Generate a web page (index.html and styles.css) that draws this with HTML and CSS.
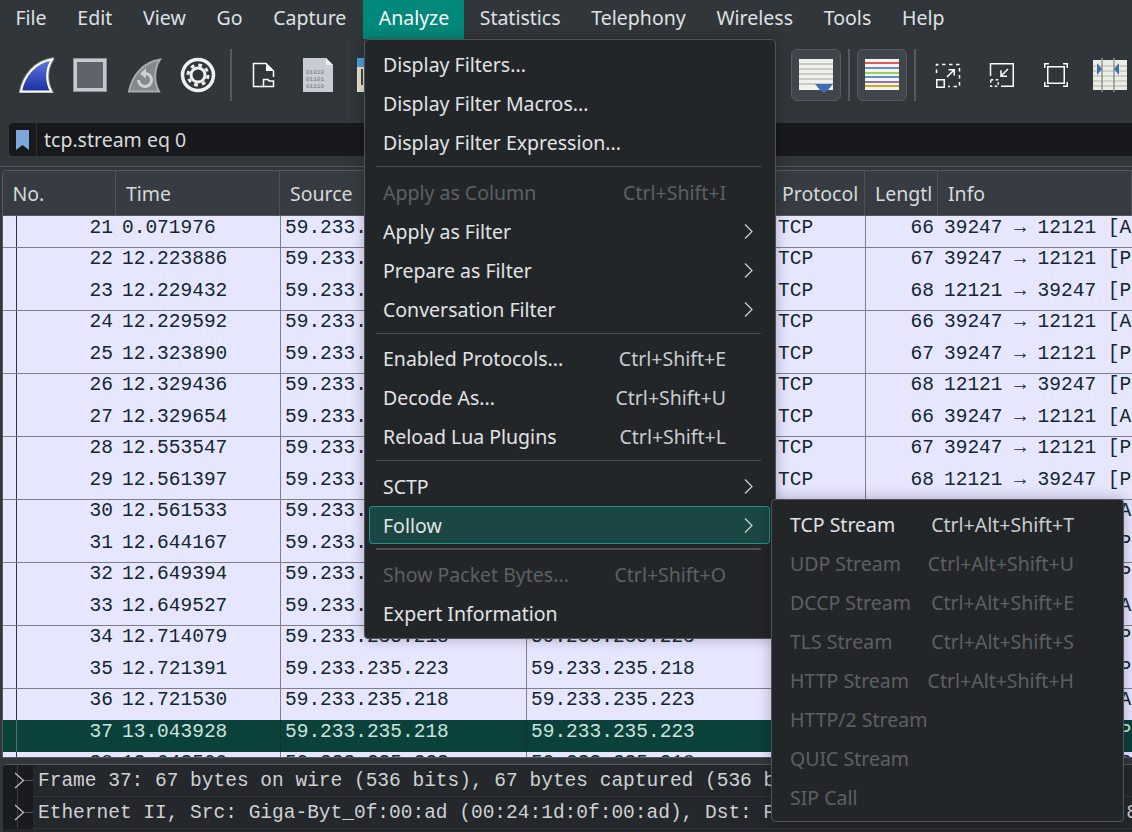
FILE: index.html
```html
<!DOCTYPE html>
<html>
  <head>
    <title>Wireshark</title>
    <link rel="stylesheet" href="styles.css">
  </head>
  <body>
    <div class="menubar">
      <div class="mb-item">File</div>
      <div class="mb-item">Edit</div>
      <div class="mb-item">View</div>
      <div class="mb-item">Go</div>
      <div class="mb-item">Capture</div>
      <div class="mb-item mb-open">Analyze</div>
      <div class="mb-item">Statistics</div>
      <div class="mb-item">Telephony</div>
      <div class="mb-item">Wireless</div>
      <div class="mb-item">Tools</div>
      <div class="mb-item">Help</div>
    </div>

    <div class="toolbar">
      <div class="tool">
        <svg width="36" height="36" viewBox="0 0 36 36">
          <defs>
            <linearGradient id="fin" x1="0" y1="0" x2="0" y2="1">
              <stop offset="0" stop-color="#5f7ae0"/>
              <stop offset="1" stop-color="#1c2fa6"/>
            </linearGradient>
          </defs>
          <path class="fin-edge" d="M3 34.500C6 19 17 5 34 2.500C28 12 27.500 24 33 34.500Z"/>
          <path d="M3 34.500C6 19 17 5 34 2.500C28 12 27.500 24 33 34.500Z" fill="url(#fin)" stroke="#fff" stroke-width="2"/>
        </svg>
      </div>
      <div class="tool">
        <svg width="36" height="36" viewBox="0 0 36 36">
          <rect x="2.500" y="2.500" width="31" height="31" fill="#5f636b" stroke="#8d9196" stroke-width="3"/>
          <rect x="3.500" y="3.500" width="29" height="29" fill="none" stroke="#c6cad0" stroke-width="3"/>
        </svg>
      </div>
      <div class="tool">
        <svg width="36" height="36" viewBox="0 0 36 36">
          <path d="M3 34.500C6 19 17 5 34 2.500C28 12 27.500 24 33 34.500Z" fill="#85898d" stroke="#a9adb1" stroke-width="2"/>
          <path d="M12.500 23A6.500 6.500 0 1 0 19 16.500" fill="none" stroke="#cdd1d5" stroke-width="3"/>
          <path d="M20 11.500V21.500L14 16.500Z" fill="#cdd1d5"/>
        </svg>
      </div>
      <div class="tool">
        <svg width="36" height="36" viewBox="0 0 36 36">
          <circle cx="18" cy="18" r="15.500" fill="none" stroke="#f0f0f0" stroke-width="3.500"/>
          <circle cx="18" cy="18" r="7" fill="none" stroke="#f0f0f0" stroke-width="3"/>
          <circle cx="18" cy="18" r="10" fill="none" stroke="#f0f0f0" stroke-width="3" stroke-dasharray="3.800 4.050"/>
        </svg>
      </div>
      <div class="tb-sep"></div>
      <div class="tool">
        <svg width="36" height="36" viewBox="0 0 36 36">
          <path d="M18 29.500H7.500V6.500H20L27.500 14V20" fill="none" stroke="#fff" stroke-width="1.500"/>
          <path d="M20 6.500V14H27.500Z" fill="#fff"/>
          <path d="M17.500 29.500V22.500H22L23 24H27.500V29.500Z" fill="none" stroke="#fff" stroke-width="1.500"/>
        </svg>
      </div>
      <div class="tool">
        <svg width="36" height="36" viewBox="0 0 36 36">
          <path d="M3 1H26L33 8V35H3Z" fill="#c9ccd4"/>
          <path d="M26 1L33 8H26Z" fill="#eef0f3"/>
          <text class="bin" x="6" y="17">01010</text>
          <text class="bin" x="6" y="24">01101</text>
          <text class="bin" x="6" y="31">01110</text>
        </svg>
      </div>
      <div class="tool">
        <svg width="36" height="36" viewBox="0 0 36 36">
          <rect x="3" y="1" width="30" height="34" fill="#e8e4cc"/>
          <rect x="3" y="1" width="30" height="9" fill="#4d9fd8"/>
          <rect x="7" y="12" width="2" height="16" fill="#444"/>
        </svg>
      </div>
      <div class="tb-hidden"></div>
      <div class="tool tool-on">
        <svg width="36" height="36" viewBox="0 0 36 36">
          <rect x="1" y="2" width="34" height="31" fill="#f0f0ec"/>
          <path d="M1 7H35M1 12H35M1 17H35M1 22H35M1 27H35" stroke="#bfc0b8" stroke-width="1.500"/>
          <path d="M17 27H35L30 33L26 36L22 33Z" fill="#3d6db0"/>
        </svg>
      </div>
      <div class="tb-sep"></div>
      <div class="tool tool-on">
        <svg width="36" height="36" viewBox="0 0 36 36">
          <rect x="1" y="2" width="34" height="31" fill="#f4f4f4"/>
          <path d="M1 6H35" stroke="#e02424" stroke-width="1.500"/>
          <path d="M1 11H35" stroke="#2f6fb5" stroke-width="1.500"/>
          <path d="M1 16H35" stroke="#7cc423" stroke-width="1.500"/>
          <path d="M1 20H35" stroke="#2f6fb5" stroke-width="1.500"/>
          <path d="M1 25H35" stroke="#6a4a8c" stroke-width="1.500"/>
          <path d="M1 29H35" stroke="#d0a814" stroke-width="2"/>
        </svg>
      </div>
      <div class="tb-sep"></div>
      <div class="tool">
        <svg width="36" height="36" viewBox="0 0 36 36">
          <path d="M6.500 16V7.500H29.500V29.500H18" fill="none" stroke="#fff" stroke-width="1.500" stroke-dasharray="3.500 3.500"/>
          <rect x="6.750" y="22.750" width="7.500" height="7.500" fill="none" stroke="#fff" stroke-width="1.500"/>
          <path d="M17 20L24 13M18.500 12.750H24.250V18.500" fill="none" stroke="#fff" stroke-width="1.500"/>
        </svg>
      </div>
      <div class="tool">
        <svg width="36" height="36" viewBox="0 0 36 36">
          <path d="M6.500 19V6.750H29.250V29.250H17" fill="none" stroke="#fff" stroke-width="1.500"/>
          <rect x="6.750" y="22.750" width="7.500" height="6.500" fill="none" stroke="#fff" stroke-width="1.500" stroke-dasharray="2.500 2.500"/>
          <path d="M24 12L17 19M17 13.250V19.250H23" fill="none" stroke="#fff" stroke-width="1.500"/>
        </svg>
      </div>
      <div class="tool">
        <svg width="36" height="36" viewBox="0 0 36 36">
          <rect x="9.750" y="9.750" width="16.500" height="16.500" fill="none" stroke="#fff" stroke-width="1.500"/>
          <path d="M6.750 11V6.750H11M25 6.750H29.250V11M29.250 25V29.250H25M11 29.250H6.750V25" fill="none" stroke="#fff" stroke-width="1.500"/>
        </svg>
      </div>
      <div class="tool">
        <svg width="36" height="36" viewBox="0 0 36 36">
          <rect x="1" y="3" width="34" height="30" fill="#eceee6"/>
          <path d="M1 9H35M1 14H35M1 19H35M1 24H35M1 29H35" stroke="#c5c7bf" stroke-width="1.500"/>
          <path d="M10 1V35M22 1V35" stroke="#8f9290" stroke-width="1.500"/>
          <path d="M5 6L10 12L5 18Z" fill="#3d6db0"/>
          <path d="M27 6L22 12L27 18Z" fill="#3d6db0"/>
        </svg>
      </div>
    </div>

    <div class="filterbar">
      <div class="filter-mark">
        <svg width="13" height="20" viewBox="0 0 13 20"><path d="M0 0H13V20L6.500 15L0 20Z" fill="#7ba7dc"/></svg>
      </div>
      <div class="filter-text">tcp.stream eq 0</div>
    </div>
    <div class="hsplit"></div>

    <div class="packets">
      <div class="head">
        <div class="hcell">No.</div>
        <div class="hcell">Time</div>
        <div class="hcell">Source</div>
        <div class="hcell">Destination</div>
        <div class="hcell">Protocol</div>
        <div class="hcell">Lengtl</div>
        <div class="hcell">Info</div>
      </div>

      <div class="row line"><i></i><b>21</b><span>0.071976</span><u>59.233.235.218</u><u>59.233.235.223</u><span>TCP</span><u class="len">66</u><span>39247 → 12121 [ACK] Seq=1 Ack=1 Win=64256</span></div>
      <div class="row"><i></i><b>22</b><span>12.223886</span><u>59.233.235.218</u><u>59.233.235.223</u><span>TCP</span><u class="len">67</u><span>39247 → 12121 [PSH, ACK] Seq=1 Ack=1</span></div>
      <div class="row line"><i></i><b>23</b><span>12.229432</span><u>59.233.235.223</u><u>59.233.235.218</u><span>TCP</span><u class="len">68</u><span>12121 → 39247 [PSH, ACK] Seq=1 Ack=2</span></div>
      <div class="row"><i></i><b>24</b><span>12.229592</span><u>59.233.235.218</u><u>59.233.235.223</u><span>TCP</span><u class="len">66</u><span>39247 → 12121 [ACK] Seq=2 Ack=3</span></div>
      <div class="row line"><i></i><b>25</b><span>12.323890</span><u>59.233.235.218</u><u>59.233.235.223</u><span>TCP</span><u class="len">67</u><span>39247 → 12121 [PSH, ACK] Seq=2 Ack=3</span></div>
      <div class="row"><i></i><b>26</b><span>12.329436</span><u>59.233.235.223</u><u>59.233.235.218</u><span>TCP</span><u class="len">68</u><span>12121 → 39247 [PSH, ACK] Seq=3 Ack=3</span></div>
      <div class="row line"><i></i><b>27</b><span>12.329654</span><u>59.233.235.218</u><u>59.233.235.223</u><span>TCP</span><u class="len">66</u><span>39247 → 12121 [ACK] Seq=3 Ack=5</span></div>
      <div class="row"><i></i><b>28</b><span>12.553547</span><u>59.233.235.218</u><u>59.233.235.223</u><span>TCP</span><u class="len">67</u><span>39247 → 12121 [PSH, ACK] Seq=3 Ack=5</span></div>
      <div class="row line"><i></i><b>29</b><span>12.561397</span><u>59.233.235.223</u><u>59.233.235.218</u><span>TCP</span><u class="len">68</u><span>12121 → 39247 [PSH, ACK] Seq=5 Ack=4</span></div>
      <div class="row"><i></i><b>30</b><span>12.561533</span><u>59.233.235.218</u><u>59.233.235.223</u><span>TCP</span><u class="len">66</u><span>39247 → 12121 [ACK] Seq=4 Ack=7</span></div>
      <div class="row line"><i></i><b>31</b><span>12.644167</span><u>59.233.235.218</u><u>59.233.235.223</u><span>TCP</span><u class="len">67</u><span>39247 → 12121 [PSH, ACK] Seq=4 Ack=7</span></div>
      <div class="row"><i></i><b>32</b><span>12.649394</span><u>59.233.235.223</u><u>59.233.235.218</u><span>TCP</span><u class="len">68</u><span>12121 → 39247 [PSH, ACK] Seq=7 Ack=5</span></div>
      <div class="row line"><i></i><b>33</b><span>12.649527</span><u>59.233.235.218</u><u>59.233.235.223</u><span>TCP</span><u class="len">66</u><span>39247 → 12121 [ACK] Seq=5 Ack=9</span></div>
      <div class="row"><i></i><b>34</b><span>12.714079</span><u>59.233.235.218</u><u>59.233.235.223</u><span>TCP</span><u class="len">67</u><span>39247 → 12121 [PSH, ACK] Seq=5 Ack=9</span></div>
      <div class="row line"><i></i><b>35</b><span>12.721391</span><u>59.233.235.223</u><u>59.233.235.218</u><span>TCP</span><u class="len">68</u><span>12121 → 39247 [PSH, ACK] Seq=9 Ack=6</span></div>
      <div class="row"><i></i><b>36</b><span>12.721530</span><u>59.233.235.218</u><u>59.233.235.223</u><span>TCP</span><u class="len">66</u><span>39247 → 12121 [ACK] Seq=6 Ack=11</span></div>
      <div class="row sel"><i></i><b>37</b><span>13.043928</span><u>59.233.235.218</u><u>59.233.235.223</u><span>TCP</span><u class="len">67</u><span>39247 → 12121 [PSH, ACK] Seq=6 Ack=11</span></div>
      <div class="row"><i></i><b>38</b><span>13.043500</span><u>59.233.235.223</u><u>59.233.235.218</u><span>TCP</span><u class="len">68</u><span>12121 → 39247 [PSH, ACK] Seq=11 Ack=7</span></div>
    </div>

    <div class="details">
      <div class="d-row">
        <div class="d-gutter">
          <svg width="30" height="31" viewBox="0 0 30 31"><path d="M14.500 0V31" stroke="#3b3e42"/><path d="M12 8L20.500 15.500L12 23" fill="none" stroke="#c4c7c9" stroke-width="1.200"/><path d="M21 15.500H30" stroke="#55595d"/></svg>
        </div>
        <div class="d-text">Frame 37: 67 bytes on wire (536 bits), 67 bytes captured (536 bits) on interface 0</div>
      </div>
      <div class="d-row">
        <div class="d-gutter">
          <svg width="30" height="31" viewBox="0 0 30 31"><path d="M14.500 0V31" stroke="#3b3e42"/><path d="M12 8L20.500 15.500L12 23" fill="none" stroke="#c4c7c9" stroke-width="1.200"/><path d="M21 15.500H30" stroke="#55595d"/></svg>
        </div>
        <div class="d-text">Ethernet II, Src: Giga-Byt_0f:00:ad (00:24:1d:0f:00:ad), Dst: Pegatron_4a:80:b2 (70:71:bc:4a:80:b2)</div>
      </div>
    </div>

    <div class="menu analyze">
      <div class="mi"><span>Display Filters...</span></div>
      <div class="mi"><span>Display Filter Macros...</span></div>
      <div class="mi"><span>Display Filter Expression...</span></div>
      <div class="msep"></div>
      <div class="mi off"><span>Apply as Column</span><em>Ctrl+Shift+I</em></div>
      <div class="mi"><span>Apply as Filter</span><em></em><svg class="chev" width="9" height="15" viewBox="0 0 9 15"><path d="M1 .5L8 7.500L1 14.500"/></svg></div>
      <div class="mi"><span>Prepare as Filter</span><em></em><svg class="chev" width="9" height="15" viewBox="0 0 9 15"><path d="M1 .5L8 7.500L1 14.500"/></svg></div>
      <div class="mi"><span>Conversation Filter</span><em></em><svg class="chev" width="9" height="15" viewBox="0 0 9 15"><path d="M1 .5L8 7.500L1 14.500"/></svg></div>
      <div class="msep msep-tight"></div>
      <div class="mi"><span>Enabled Protocols...</span><em>Ctrl+Shift+E</em></div>
      <div class="mi"><span>Decode As...</span><em>Ctrl+Shift+U</em></div>
      <div class="mi"><span>Reload Lua Plugins</span><em>Ctrl+Shift+L</em></div>
      <div class="msep"></div>
      <div class="mi"><span>SCTP</span><em></em><svg class="chev" width="9" height="15" viewBox="0 0 9 15"><path d="M1 .5L8 7.500L1 14.500"/></svg></div>
      <div class="mi hot"><span>Follow</span><em></em><svg class="chev" width="9" height="15" viewBox="0 0 9 15"><path d="M1 .5L8 7.500L1 14.500"/></svg></div>
      <div class="msep msep-thick"></div>
      <div class="mi off"><span>Show Packet Bytes...</span><em>Ctrl+Shift+O</em></div>
      <div class="mi"><span>Expert Information</span></div>
    </div>

    <div class="menu follow">
      <div class="mi"><span>TCP Stream</span><em>Ctrl+Alt+Shift+T</em></div>
      <div class="mi off"><span>UDP Stream</span><em>Ctrl+Alt+Shift+U</em></div>
      <div class="mi off"><span>DCCP Stream</span><em>Ctrl+Alt+Shift+E</em></div>
      <div class="mi off"><span>TLS Stream</span><em>Ctrl+Alt+Shift+S</em></div>
      <div class="mi off"><span>HTTP Stream</span><em>Ctrl+Alt+Shift+H</em></div>
      <div class="mi off"><span>HTTP/2 Stream</span></div>
      <div class="mi off"><span>QUIC Stream</span></div>
      <div class="mi off"><span>SIP Call</span></div>
    </div>
  </body>
</html>
```

FILE: styles.css
```css
html, body {
  margin: 0;
  height: 100%;
}

body {
  position: relative;
  width: 1132px;
  height: 832px;
  overflow: hidden;
  background: #31363b;
  color: #dfe1e3;
  font-family: "Noto Sans", sans-serif;
  font-size: 19.500px;
}

/* menu bar */
.menubar {
  display: flex;
  height: 39px;
}

.mb-item {
  padding: 0 15.400px;
  line-height: 35px;
}

.mb-open {
  margin-left: 1px;
  padding: 0 15px 0 16px;
  background: #00897b;
  color: #fcfcfc;
}

/* toolbar */
.toolbar {
  display: flex;
  align-items: center;
  height: 72px;
  padding-left: 9px;
}

.tool {
  flex: none;
  display: flex;
  align-items: center;
  justify-content: center;
  width: 54px;
  height: 52px;
  box-sizing: border-box;
}

.tool-on {
  background: #41464c;
  border: 1px solid #565a60;
  border-radius: 6px;
  width: 50px;
  margin: 0 2px;
}

.tb-sep {
  flex: none;
  width: 2px;
  height: 52px;
  margin: 0 5px;
  background: #565a60;
}

.tb-hidden {
  flex: none;
  width: 390px;
}

.fin-edge {
  fill: none;
  stroke: #8d9196;
  stroke-width: 4;
}

.bin {
  font-family: "Liberation Mono", monospace;
  font-size: 6px;
  fill: #70747c;
}

/* display filter */
.filterbar {
  display: flex;
  align-items: center;
  height: 33px;
  margin: 12px 0 10px 9px;
  background: #17191c;
  border-radius: 4px 0 0 4px;
}

.filter-mark {
  display: flex;
  align-items: center;
  justify-content: center;
  width: 27px;
  height: 33px;
  border-right: 1px solid #2b2e32;
}

.filter-text {
  padding-left: 7px;
  color: #d8dadc;
}

.hsplit {
  height: 1px;
  margin-bottom: 3px;
  background: #54585e;
}

/* packet list */
.packets {
  height: 588px;
  box-sizing: border-box;
  margin-left: 2px;
  border-top: 1px solid #54585e;
  border-left: 1px solid #54585e;
  border-bottom: 1px solid #54585e;
  border-top-left-radius: 4px;
  overflow: hidden;
}

.head {
  display: grid;
  grid-template-columns: 113px 164px 246px 246px 93px 73px 1fr;
  height: 45px;
  background: #373c42;
  border-bottom: 1px solid #54585e;
  box-sizing: border-box;
}

.hcell {
  padding-left: 10px;
  line-height: 46px;
  overflow: hidden;
  white-space: nowrap;
  border-right: 1px solid #4f5359;
  color: #d6d9db;
}

.hcell:first-child {
  padding-left: 9.500px;
}

.row {
  display: grid;
  grid-template-columns: 13px 100px 164px 246px 246px 93px 73px 1fr;
  height: 31.500px;
  box-sizing: border-box;
  background: #e7e6ff;
  color: #12272e;
  font-family: "Liberation Mono", monospace;
  font-size: 19.500px;
  line-height: 23.400px;
  white-space: nowrap;
}

.row.line {
  border-bottom: 1px solid #7f7f88;
  line-height: 24px;
}

.row b,
.row u,
.row span {
  font-weight: normal;
  text-decoration: none;
  overflow: hidden;
}

.row i {
  display: block;
}

.row b {
  border-left: 1px solid #34373c;
  text-align: right;
  padding-right: 3px;
}

.row span {
  padding-left: 6px;
}

.row u {
  padding-left: 4px;
  border-left: 1px solid #7f7f88;
}

.row .len {
  padding: 0 4px 0 0;
  text-align: right;
}

.row.sel {
  background: #0a413b;
  color: #cbe2de;
  line-height: 24px;
}

.row.sel b {
  border-left-color: #51706c;
}

.row.sel u {
  border-left-color: #17302d;
}

/* packet details */
.details {
  margin: 6px 0 0 3px;
  height: 68px;
  background: #24272b;
  border-top: 1px solid #54585e;
  border-top-left-radius: 4px;
  box-sizing: border-box;
  overflow: hidden;
  color: #cfd2d4;
  font-family: "Liberation Mono", monospace;
  font-size: 19.500px;
  white-space: nowrap;
}

.d-row {
  display: flex;
  height: 32px;
  box-sizing: border-box;
  border-bottom: 1px solid #303439;
}

.d-gutter {
  flex: none;
  width: 30px;
  height: 32px;
  background: #191b1e;
}

.d-text {
  padding-left: 5px;
  line-height: 32.500px;
}

/* popup menus */
.menu {
  position: absolute;
  box-sizing: border-box;
  background: #232629;
  border: 1px solid #50545a;
  border-radius: 4px;
  box-shadow: 0 0 14px rgba(0, 0, 0, 0.28);
  white-space: nowrap;
}

.analyze {
  top: 39px;
  left: 364px;
  width: 412px;
  height: 600px;
  padding: 4.500px 0;
}

.follow {
  top: 499px;
  left: 771px;
  width: 353px;
  height: 323px;
  padding: 4.500px 0;
}

.mi {
  display: grid;
  grid-template-columns: 1fr auto 27px;
  align-items: center;
  box-sizing: border-box;
  height: 39px;
  margin: 0 5px 0 4px;
  padding: 0 17px 0 14px;
  color: #e1e3e5;
}

.mi em {
  font-style: normal;
  color: #c9cccf;
}

.mi.off span,
.mi.off em {
  color: #5c6064;
}

.follow .mi {
  grid-template-columns: 1fr auto 28px;
  margin: 0 4px 0 4px;
}

.chev {
  justify-self: end;
  fill: none;
  stroke: #c9ccce;
  stroke-width: 1.300;
}

.hot {
  background: #1a4644;
  box-shadow: inset 0 0 0 1px #1f9585;
  border-radius: 4px;
  height: 38px;
  margin-top: .500px;
  margin-bottom: .500px;
}

.msep {
  height: 1px;
  margin: 4px 14px 6px 11px;
  background: #4c5055;
}

.msep-tight {
  margin-bottom: 5px;
}

.msep-thick {
  height: 2px;
  margin-bottom: 5px;
}
```
